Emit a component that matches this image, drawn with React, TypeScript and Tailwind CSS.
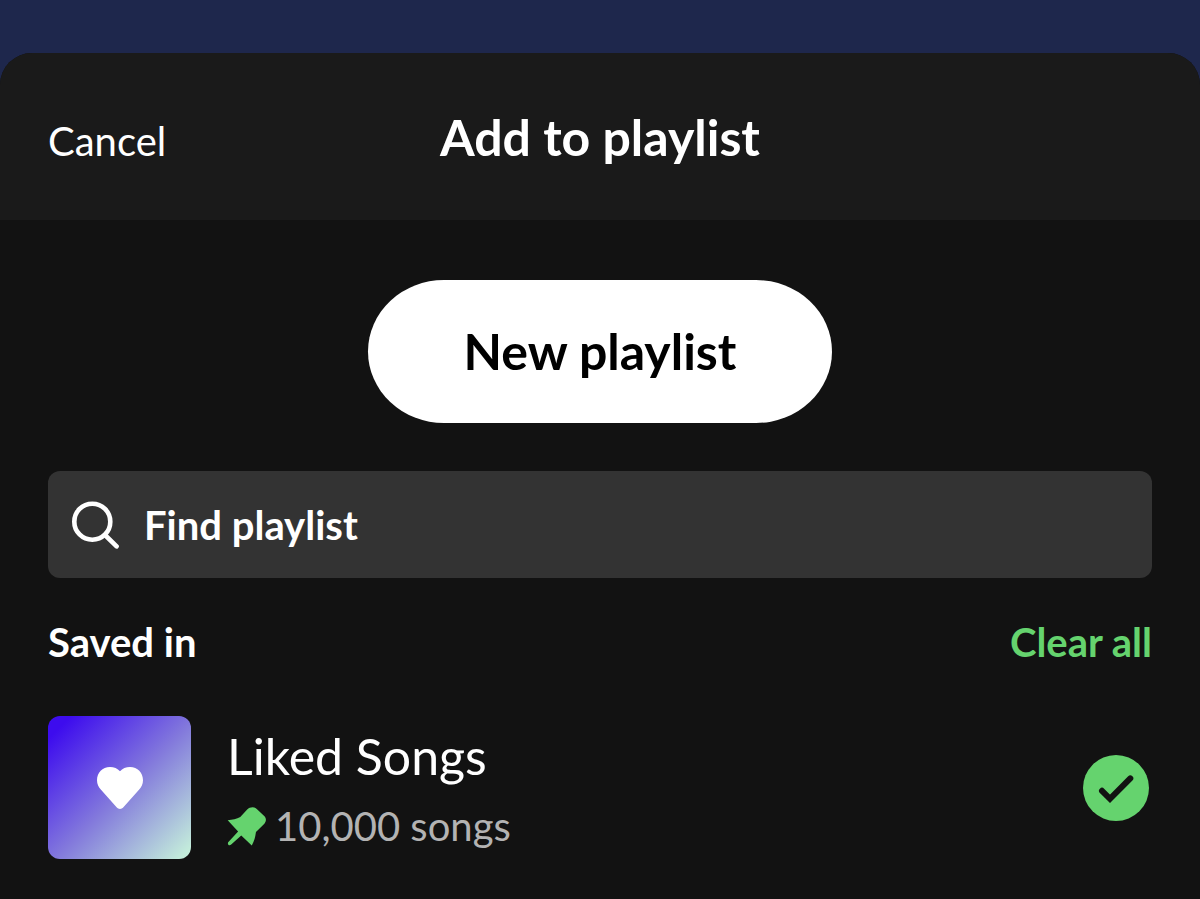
import { useState } from "react";

const playlists = [{ id: "liked", title: "Liked Songs", songs: "10,000 songs" }];

function SearchIcon() {
  return (
    <svg className="size-12 shrink-0" viewBox="0 0 48 48" fill="none" stroke="currentColor" strokeWidth="4.6" strokeLinecap="round" aria-hidden="true">
      <circle cx="20.3" cy="20.7" r="18" />
      <path d="M33.5 34.5 44.6 45.3" />
    </svg>
  );
}

function HeartIcon() {
  return (
    <svg className="h-[42px] w-[46px]" viewBox="0 0 46 42" fill="currentColor" aria-hidden="true">
      <path d="M23 4.2C20.6 1.6 17 0 13 0 5.4 0 0 5.8 0 13.2c0 4 1.6 6.9 4 9.5L19.6 40.2c2 2.3 4.8 2.3 6.8 0L42 22.7c2.4-2.6 4-5.5 4-9.5C46 5.8 40.6 0 33 0c-4 0-7.6 1.6-10 4.2Z" />
    </svg>
  );
}

function PinIcon() {
  return (
    <svg className="size-10 shrink-0" viewBox="0 0 41 41" fill="currentColor" aria-hidden="true">
      <path d="M.7 14.7C5.5 14.1 10 13.2 13.6 11.3L20.7 3.6C23.5.8 28 .6 30.500 3L38.400 10.400C40.600 12.800 40.300 16 37.800 18.600L29.700 26.700C29.200 31.500 27.800 36.200 25.400 40.400L14.600 30.200 4 39.800C2 41 .2 39.200 1.200 37.200L11.400 26.200Z" />
    </svg>
  );
}

function CheckIcon() {
  return (
    <svg className="size-[66px]" viewBox="0 0 66 66" fill="none" aria-hidden="true">
      <circle cx="33" cy="33" r="33" fill="#65d36e" />
      <path d="M19 35.8 27 43.8 47.3 23.4" stroke="#121212" strokeWidth="6" strokeLinecap="round" />
    </svg>
  );
}

export default function App() {
  const [query, setQuery] = useState("");
  const [saved, setSaved] = useState<string[]>(["liked"]);

  const toggle = (id: string) => {
    setSaved(saved.includes(id) ? saved.filter((s) => s !== id) : [...saved, id]);
  };

  return (
    <div className="flex min-h-screen flex-col bg-[#1e274c] pt-[53px] font-['Lato',sans-serif] text-white">
      <div className="flex flex-1 flex-col overflow-hidden rounded-t-[32px] bg-[#121212]">
        {/* Sheet header */}
        <header className="grid grid-cols-[1fr_auto_1fr] items-baseline bg-[#1a1a1a] px-12 pt-[57px] pb-[55px]">
          <button className="justify-self-start text-[40px] leading-[48px]">Cancel</button>
          <h1 className="text-[50px] leading-[55px] font-bold">Add to playlist</h1>
        </header>

        <main className="flex flex-col px-12 pt-[60px] pb-10">
          <button className="self-center rounded-[76px/50%] bg-white px-24 py-11 text-[50px] leading-[55px] font-bold text-black">
            New playlist
          </button>

          <label className="mt-12 flex h-[107px] items-center gap-6 rounded-xl bg-[#333333] px-6">
            <SearchIcon />
            <input
              type="text"
              aria-label="Find playlist"
              placeholder="Find playlist"
              value={query}
              onChange={(e) => setQuery(e.target.value)}
              className="h-12 min-w-0 flex-1 bg-transparent text-[40px] leading-[48px] font-bold outline-none placeholder:text-white placeholder:opacity-100"
            />
          </label>

          {/* Saved playlists */}
          <div className="mt-10 flex items-baseline justify-between">
            <h2 className="text-[40px] leading-[48px] font-bold">Saved in</h2>
            <button onClick={() => setSaved([])} className="text-[40px] leading-[48px] font-bold text-[#65d36e]">
              Clear all
            </button>
          </div>

          <ul className="mt-[50px]">
            {playlists.map((p) => (
              <li key={p.id} className="flex items-center">
                <div className="flex size-[143px] shrink-0 items-center justify-center rounded-xl bg-[linear-gradient(135deg,#3d0cee_8%,#8278dc_52%,#c3ecdb_96%)]">
                  <HeartIcon />
                </div>
                <div className="ml-9 flex min-w-0 flex-1 flex-col gap-[18px] pt-[3px]">
                  <span className="text-[50px] leading-[55px]">{p.title}</span>
                  <span className="flex items-center gap-2 text-[40px] leading-[48px] text-[#b3b3b3]">
                    <span className="text-[#65d36e]">
                      <PinIcon />
                    </span>
                    {p.songs}
                  </span>
                </div>
                <button
                  aria-label={`Saved in ${p.title}`}
                  aria-pressed={saved.includes(p.id)}
                  onClick={() => toggle(p.id)}
                  className="mr-[3px] aria-[pressed=false]:opacity-30"
                >
                  <CheckIcon />
                </button>
              </li>
            ))}
          </ul>
        </main>
      </div>
    </div>
  );
}
